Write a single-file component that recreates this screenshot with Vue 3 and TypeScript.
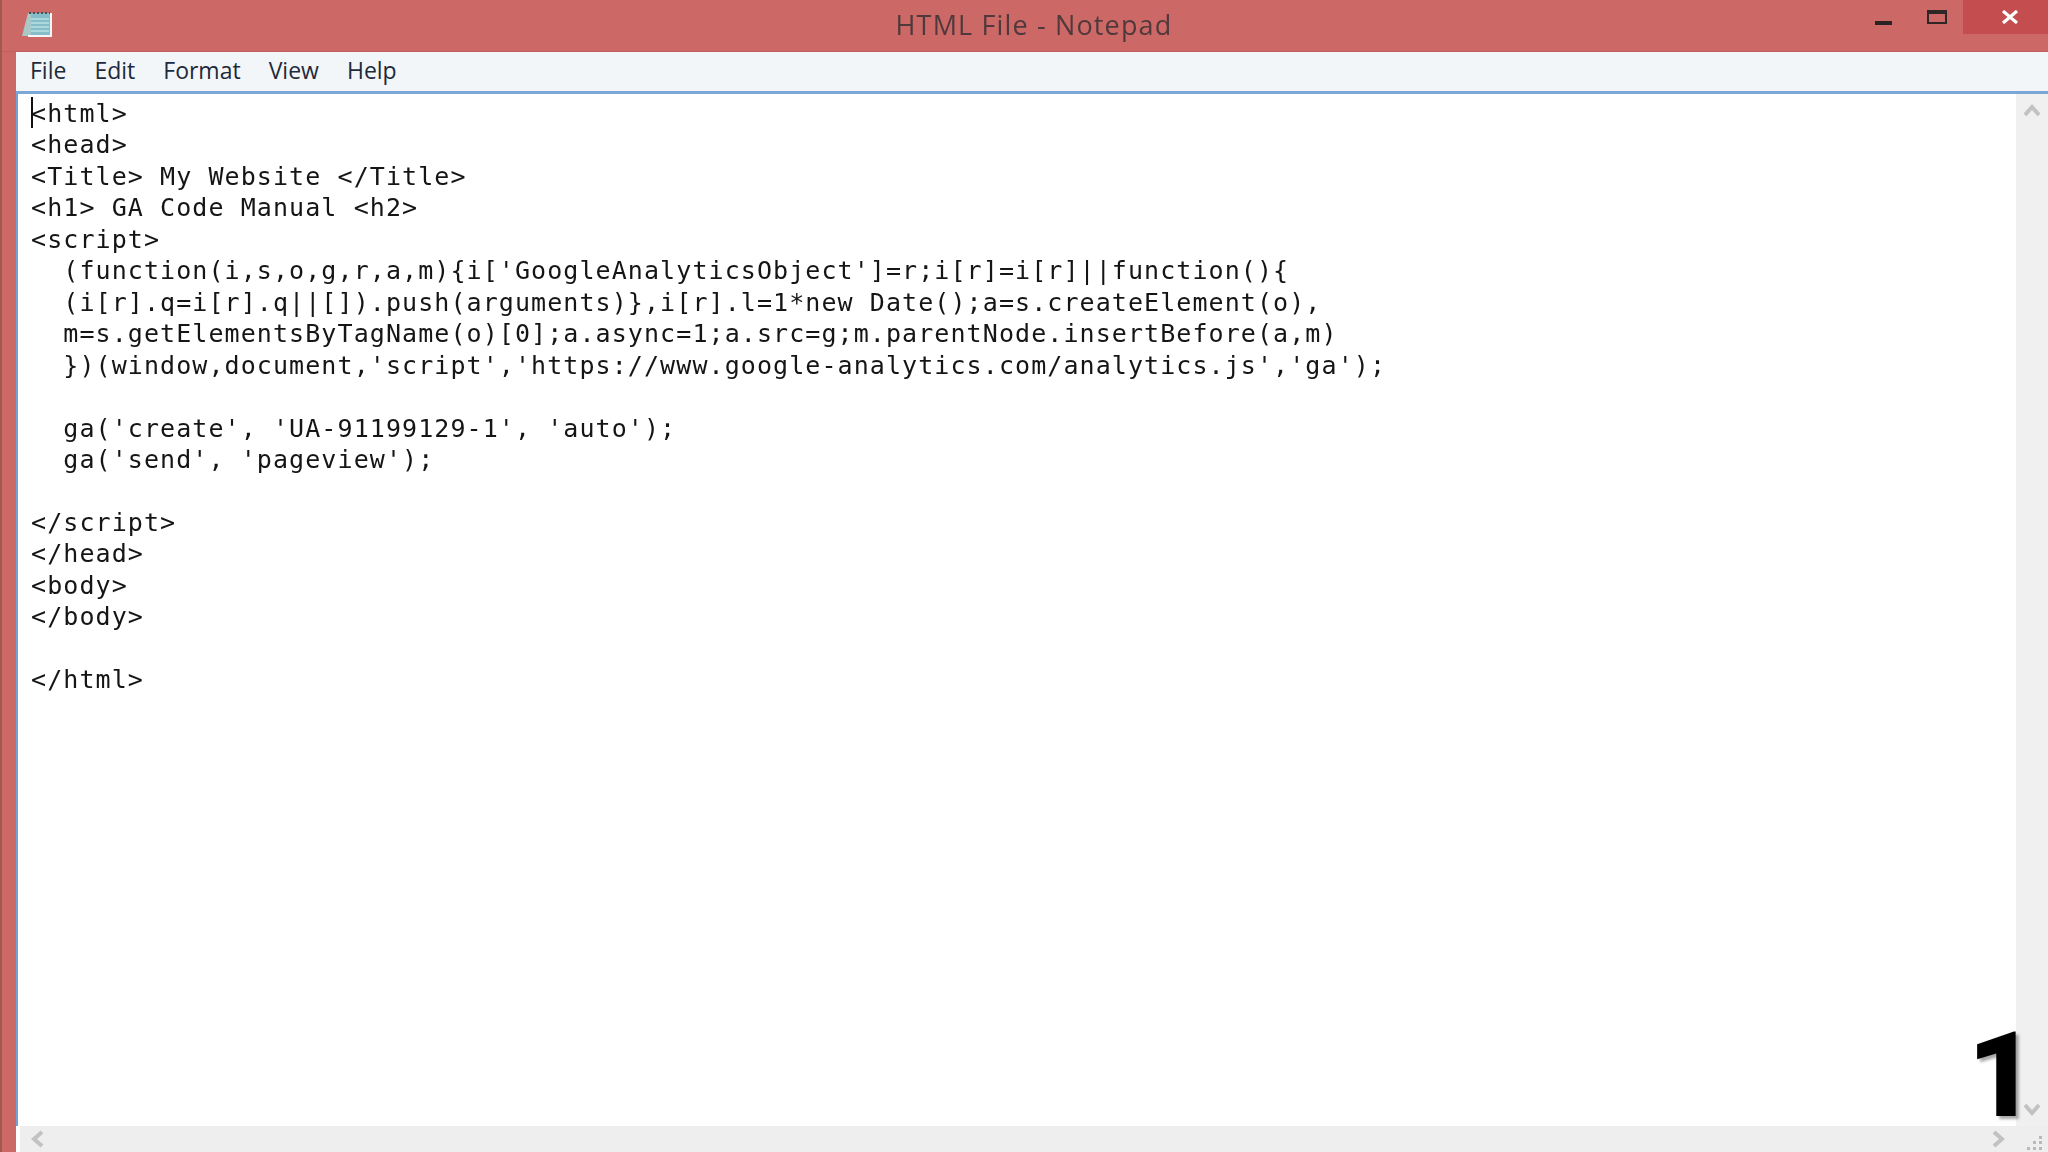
<script setup lang="ts">
const lines: string[] = [
  "<html>",
  "<head>",
  "<Title> My Website </Title>",
  "<h1> GA Code Manual <h2>",
  "<script>",
  "  (function(i,s,o,g,r,a,m){i['GoogleAnalyticsObject']=r;i[r]=i[r]||function(){",
  "  (i[r].q=i[r].q||[]).push(arguments)},i[r].l=1*new Date();a=s.createElement(o),",
  "  m=s.getElementsByTagName(o)[0];a.async=1;a.src=g;m.parentNode.insertBefore(a,m)",
  "  })(window,document,'script','https://www.google-analytics.com/analytics.js','ga');",
  "",
  "  ga('create', 'UA-91199129-1', 'auto');",
  "  ga('send', 'pageview');",
  "",
  "<\/script>",
  "</head>",
  "<body>",
  "</body>",
  "",
  "</html>",
];
const menus: string[] = ["File", "Edit", "Format", "View", "Help"];
</script>

<template>
  <div class="window">
    <header class="titlebar">
      <svg class="app-icon" width="32" height="28" viewBox="0 0 32 28">
        <path d="M6 3 H29 V26 H0 Z" fill="#a9c9c9" />
        <path d="M9 3 H29 V26 H9 Z" fill="#86bdc8" />
        <path d="M29 3 V26 H6" fill="none" stroke="#f4f7f7" stroke-width="2" />
        <path d="M9 9 H27 M9 13 H27 M9 17 H27 M9 21 H27" stroke="#b9dfe3" stroke-width="1.5" />
        <path d="M7 3 H28" stroke="#3f5560" stroke-width="2" stroke-dasharray="2 2" />
      </svg>
      <span class="title">HTML File - Notepad</span>
      <div class="controls">
        <span class="btn btn-min"><i class="min-bar"></i></span>
        <span class="btn btn-max"><i class="max-box"></i></span>
        <span class="btn btn-close">
          <svg width="18" height="14" viewBox="0 0 18 14">
            <path d="M2 1 L16 13 M16 1 L2 13" stroke="#fff" stroke-width="3.2" />
          </svg>
        </span>
      </div>
    </header>

    <div class="client">
      <nav class="menubar">
        <span v-for="m in menus" :key="m" class="menu-item">{{ m }}</span>
      </nav>
      <div class="edit-row">
        <main class="editor">
          <i class="caret"></i>
          <pre v-for="(l, i) in lines" :key="i" class="line">{{ l }}</pre>
        </main>
        <aside class="vscroll">
          <svg width="18" height="13" viewBox="0 0 18 13"><path d="M2 11 L9 3 L16 11" fill="none" stroke="#c2c2c2" stroke-width="4" /></svg>
          <svg width="18" height="13" viewBox="0 0 18 13"><path d="M2 2 L9 10 L16 2" fill="none" stroke="#c2c2c2" stroke-width="4" /></svg>
        </aside>
      </div>
      <footer class="hscroll">
        <svg width="13" height="18" viewBox="0 0 13 18"><path d="M11 2 L3 9 L11 16" fill="none" stroke="#c2c2c2" stroke-width="4" /></svg>
        <svg width="13" height="18" viewBox="0 0 13 18"><path d="M2 2 L10 9 L2 16" fill="none" stroke="#c2c2c2" stroke-width="4" /></svg>
        <svg class="grip" width="18" height="16" viewBox="0 0 18 16" fill="#b9b9b9">
          <rect x="13" y="1" width="3" height="3" />
          <rect x="7" y="6" width="3" height="3" /><rect x="13" y="6" width="3" height="3" />
          <rect x="1" y="12" width="3" height="3" /><rect x="7" y="12" width="3" height="3" /><rect x="13" y="12" width="3" height="3" />
        </svg>
      </footer>
    </div>

    <span class="big-number">1</span>
  </div>
</template>

<style>
html, body { margin: 0; padding: 0; }
</style>

<style scoped>
.window {
  position: relative;
  width: 2048px;
  height: 1152px;
  box-sizing: border-box;
  display: flex;
  flex-direction: column;
  overflow: hidden;
  background: #cc6966;
  border-left: 2px solid #a3584c;
}
.titlebar {
  position: relative;
  height: 52px;
  flex: none;
  display: flex;
  align-items: center;
  justify-content: center;
  border-bottom: 1px solid #c25f5b;
  box-sizing: border-box;
}
.app-icon { position: absolute; left: 20px; top: 10px; }
.title {
  font-family: "Open Sans", "Noto Sans", sans-serif;
  font-size: 27px;
  letter-spacing: 1.15px;
  color: #50393c;
  transform: translate(9px, -1px);
  filter: blur(0.4px);
}
.controls {
  position: absolute;
  right: 0;
  top: 0;
  height: 34px;
  display: flex;
}
.btn { display: flex; align-items: center; justify-content: center; height: 34px; }
.btn-min { width: 54px; padding-left: 2px; box-sizing: border-box; }
.btn-max { width: 54px; padding-left: 2px; box-sizing: border-box; }
.btn-close { width: 85px; background: #c44d4f; padding-left: 8px; box-sizing: border-box; }
.min-bar { display: block; width: 17px; height: 4px; margin-top: 11px; background: #2b2224; }
.max-box {
  display: block;
  width: 20px;
  height: 14px;
  box-sizing: border-box;
  border: 2px solid #2f2628;
  border-top-width: 4px;
}
.client {
  flex: 1;
  min-height: 0;
  margin-left: 14px;
  display: flex;
  flex-direction: column;
  background: #fff;
}
.menubar {
  height: 42px;
  flex: none;
  box-sizing: border-box;
  display: flex;
  align-items: center;
  padding: 0 0 3px 14px;
  gap: 28px;
  background: #f2f6f8;
  border-bottom: 3px solid #7ba7d6;
  font-family: "Open Sans", "Noto Sans", sans-serif;
  font-size: 23px;
  color: #1e2a3c;
}
.edit-row {
  flex: 1;
  min-height: 0;
  display: flex;
  border-left: 2px solid #6fa3d8;
}
.editor {
  position: relative;
  flex: 1;
  padding: 5px 0 0 13px;
  font-family: "DejaVu Sans Mono", "Liberation Mono", monospace;
  font-size: 25px;
  letter-spacing: 1.08px;
  color: #151515;
  filter: blur(0.35px);
}
.line {
  margin: 0;
  height: 31.46px;
  line-height: 31.46px;
  font: inherit;
  white-space: pre;
}
.caret {
  position: absolute;
  left: 13px;
  top: 3px;
  width: 2px;
  height: 31px;
  background: #111;
}
.vscroll {
  width: 32px;
  flex: none;
  background: #f0f0f0;
  display: flex;
  flex-direction: column;
  align-items: center;
  justify-content: space-between;
  padding: 10px 0 10px;
  box-sizing: border-box;
}
.hscroll {
  height: 26px;
  flex: none;
  margin-left: 4px;
  background: #eeeeee;
  display: flex;
  align-items: center;
  padding-left: 11px;
  gap: 1948px;
  position: relative;
}
.grip { position: absolute; right: 4px; bottom: 1px; }
.big-number {
  position: absolute;
  right: 12px;
  bottom: 30px;
  font-family: Roboto, "Liberation Sans", sans-serif;
  font-weight: 900;
  font-size: 118px;
  line-height: 92px;
  color: #000;
  text-shadow: 3px 3px 3px rgba(0, 0, 0, 0.35);
}
</style>
